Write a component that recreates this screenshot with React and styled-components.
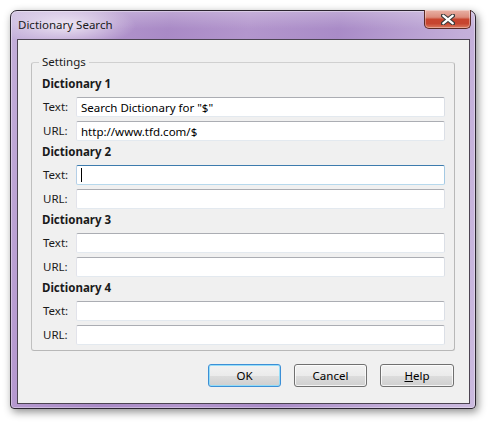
import React from "react";
import styled, { createGlobalStyle } from "styled-components";

const GlobalStyle = createGlobalStyle`
  html, body { margin: 0; padding: 0; background: #ffffff; }
  body { font-family: "Segoe UI", "Noto Sans", "Liberation Sans", sans-serif; font-size: 11.5px; color: #000; }
  * { box-sizing: border-box; }
`;

const Page = styled.div`
  width: 495px;
  height: 427px;
  padding: 10px 0 0 10px;
`;

const Window = styled.div`
  width: 466px;
  height: 399px;
  border: 1px solid #2b2530;
  border-radius: 7px 7px 4px 4px;
  background:
    radial-gradient(ellipse 70px 22px at 55px 14px, rgba(255,255,255,0.75), rgba(255,255,255,0) 100%),
    linear-gradient(180deg, rgba(255,255,255,0.25) 0px, rgba(255,255,255,0) 18px),
    linear-gradient(100deg, #c4b0da 0%, #b69ad0 12%, #a98ac6 30%, #b396cd 45%, #a98bc7 62%, #c3aed9 85%, #cbbadf 100%);
  box-shadow: 2px 3px 9px rgba(0,0,0,0.45), inset 0 0 0 1px rgba(255,255,255,0.35);
  display: flex;
  flex-direction: column;
  padding: 0 5px 4px 6px;
`;

const TitleBar = styled.div`
  height: 28px;
  display: flex;
  align-items: flex-start;
  justify-content: space-between;
`;

const Title = styled.div`
  font-size: 11.5px;
  line-height: 16px;
  padding-top: 6px;
  padding-left: 1px;
  color: #1a1a1a;
`;

const CloseButton = styled.div`
  width: 47px;
  height: 19px;
  margin-top: -1px;
  margin-right: -1px;
  border: 1px solid #5a2a26;
  border-top: none;
  border-radius: 0 0 5px 5px;
  background: linear-gradient(180deg, #e9b2a6 0%, #dc8c7c 40%, #c8452f 52%, #c64530 75%, #db7a5f 100%);
  box-shadow: inset 0 0 0 1px rgba(255,255,255,0.35);
  display: flex;
  align-items: center;
  justify-content: center;
`;

const Client = styled.div`
  flex: 1;
  background: #f0f0f0;
  border: 1px solid #4c4452;
  display: flex;
  flex-direction: column;
  padding: 0 14px 0 13px;
`;

const Group = styled.fieldset`
  margin: 14px 0 0 0;
  padding: 4px 9px 5px 10px;
  border-radius: 3px;
  border-style: solid;
  border-width: 1px;
  border-color: #d0d0d0 #b8b8b8 #b8b8b8 #c0c0c0;
`;

const Legend = styled.legend`
  padding: 0 3px;
  margin-left: -3px;
  line-height: 16px;
  color: #1a1a1a;
`;

const Block = styled.div`
  display: flex;
  flex-direction: column;
  gap: 4px;
  & + & { margin-top: 1px; }
`;

const Heading = styled.div`
  font-weight: bold;
  line-height: 20px;
  height: 20px;
  margin-bottom: -1px;
  color: #1a1a1a;
`;

const Row = styled.div`
  display: grid;
  grid-template-columns: 34px 1fr;
  align-items: center;
`;

const Label = styled.label`
  padding-left: 1px;
  line-height: 16px;
  color: #1a1a1a;
`;

const Field = styled.div`
  position: relative;
  height: 20px;
  border: 1px solid;
  border-radius: 2px;
  border-color: ${p => p.$focused ? "#3d7bad #a4c9e3 #b7d9ed #b5cfe7" : "#abadb3 #dbdfe6 #e3e9ef #e2e3ea"};
  background: #ffffff;
  display: flex;
  align-items: center;
`;

const Input = styled.input`
  border: none;
  outline: none;
  background: transparent;
  width: 100%;
  height: 18px;
  padding: 0 0 0 4px;
  font: inherit;
  color: #000;
`;

const Caret = styled.span`
  position: absolute;
  left: 4px;
  top: 2px;
  width: 1px;
  height: 14px;
  background: #000;
`;

const ButtonRow = styled.div`
  display: flex;
  justify-content: flex-end;
  gap: 13px;
  margin-top: 13px;
  padding-right: 1px;
`;

const Button = styled.button`
  width: ${p => p.$w || 73}px;
  height: 23px;
  font: inherit;
  color: #000;
  padding: 0;
  border: 1px solid ${p => p.$default ? "#3c8fd6" : "#707070"};
  border-radius: 3px;
  background: linear-gradient(180deg, #f2f2f2 0%, #ebebeb 50%, #dddddd 51%, #cfcfcf 100%);
  box-shadow: inset 0 0 0 1px ${p => p.$default ? "rgba(140,220,250,0.9)" : "rgba(255,255,255,0.75)"};
  u { text-decoration: underline; }
`;

const dictionaries = [
  { name: "Dictionary 1", text: 'Search Dictionary for "$"', url: "http://www.tfd.com/$" },
  { name: "Dictionary 2", text: "", url: "", focused: true },
  { name: "Dictionary 3", text: "", url: "" },
  { name: "Dictionary 4", text: "", url: "" },
];

function CloseGlyph() {
  return (
    <svg width="14" height="11" viewBox="0 0 14 11">
      <path d="M2 1.5 L12 9.5 M12 1.5 L2 9.5" stroke="#3a3a3a" strokeWidth="4.2" strokeLinecap="round" />
      <path d="M2.2 1.7 L11.8 9.3 M11.8 1.7 L2.2 9.3" stroke="#ffffff" strokeWidth="2.2" strokeLinecap="round" />
    </svg>
  );
}

export default function App() {
  return (
    <Page>
      <GlobalStyle />
      <Window>
        <TitleBar>
          <Title>Dictionary Search</Title>
          <CloseButton><CloseGlyph /></CloseButton>
        </TitleBar>
        <Client>
          <Group>
            <Legend>Settings</Legend>
            {dictionaries.map((d) => (
              <Block key={d.name}>
                <Heading>{d.name}</Heading>
                <Row>
                  <Label>Text:</Label>
                  <Field $focused={d.focused}>
                    <Input readOnly defaultValue={d.text} />
                    {d.focused && <Caret />}
                  </Field>
                </Row>
                <Row>
                  <Label>URL:</Label>
                  <Field>
                    <Input readOnly defaultValue={d.url} />
                  </Field>
                </Row>
              </Block>
            ))}
          </Group>
          <ButtonRow>
            <Button $default>OK</Button>
            <Button $w={73}>Cancel</Button>
            <Button $w={74}><u>H</u>elp</Button>
          </ButtonRow>
        </Client>
      </Window>
    </Page>
  );
}
